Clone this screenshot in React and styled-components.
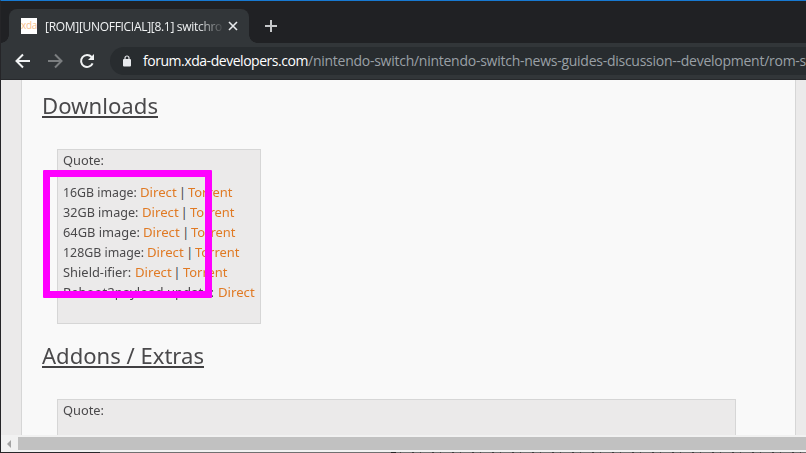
import React, { useLayoutEffect, useRef, useState } from "react";
import styled, { createGlobalStyle } from "styled-components";

const GlobalStyle = createGlobalStyle`
  * { box-sizing: border-box; }
  html, body { margin: 0; padding: 0; overflow: hidden; background: #1f1f22; }
`;

const Window = styled.div`
  position: relative;
  display: flex;
  flex-direction: column;
  width: 806px;
  height: 453px;
  overflow: hidden;
  border-top: 1px solid #1779d2;
  border-left: 1px solid #252528;
  background: #202124;
`;

const TabStrip = styled.div`
  flex: none;
  display: flex;
  height: 42px;
  padding: 8px 0 0 8px;
  background: #202124;
`;

const Tab = styled.div`
  position: relative;
  display: flex;
  align-items: center;
  width: 240px;
  height: 34px;
  padding: 0 10px 0 12px;
  border-radius: 8px 8px 0 0;
  background: #323639;
  &::before, &::after {
    content: "";
    position: absolute;
    bottom: 0;
    width: 8px;
    height: 8px;
  }
  &::before {
    left: -8px;
    background: radial-gradient(circle at 0 0, transparent 7.5px, #323639 8px);
  }
  &::after {
    right: -8px;
    background: radial-gradient(circle at 100% 0, transparent 7.5px, #323639 8px);
  }
`;

const Favicon = styled.div`
  flex: none;
  display: flex;
  justify-content: center;
  width: 16px;
  height: 16px;
  overflow: hidden;
  background: #fff;
  color: #f7c08e;
  font: 10px/14px "Open Sans", sans-serif;
  letter-spacing: -0.3px;
`;

const TabTitle = styled.div`
  flex: none;
  width: 177px;
  margin-left: 8px;
  padding-top: 1px;
  white-space: nowrap;
  color: #f1f3f4;
  font: 12px/16px "Open Sans", sans-serif;
  mask-image: linear-gradient(to right, #000 152px, rgba(0, 0, 0, 0.1) 177px);
`;

const CloseIcon = styled.svg`
  flex: none;
  width: 10px;
  height: 10px;
  margin-left: 6px;
`;

const PlusIcon = styled.svg`
  width: 12px;
  height: 12px;
  margin: 11px 0 0 16px;
`;

const Toolbar = styled.div`
  flex: none;
  display: flex;
  align-items: center;
  height: 37px;
  padding: 0 0 1px 14px;
  border-bottom: 1px solid #27292c;
  background: #323639;
`;

const NavIcon = styled.svg`
  flex: none;
  width: 16px;
  height: 16px;
  margin-right: 16px;
`;

const Omnibox = styled.div`
  flex: 1;
  display: flex;
  align-items: center;
  height: 28px;
  margin-left: -1px;
  padding-left: 13px;
  border-radius: 14px 0 0 14px;
  background: #282c2f;
`;

const LockIcon = styled.svg`
  flex: none;
  width: 8px;
  height: 12px;
  margin-right: 12px;
`;

const Url = styled.div`
  flex: none;
  padding-top: 1px;
  white-space: nowrap;
  color: #9aa0a6;
  font: 14px/20px "Open Sans", sans-serif;
`;

const Host = styled.span`
  color: #fff;
`;

const Viewport = styled.div`
  flex: none;
  height: 355px;
  padding: 0 10px 0 20px;
  overflow: hidden;
  background: #ebeaea;
`;

const Article = styled.main`
  height: 355px;
  padding: 13px 0 0 20px;
  border: solid #d6d6d6;
  border-width: 0 1px;
  background: #f9f9f9;
  color: #4a494b;
  font: 13.4px/20px "Noto Sans", sans-serif;
`;

const Heading = styled.h2`
  width: max-content;
  height: 25px;
  margin: 0;
  border-bottom: 2px solid #414042;
  color: #4a494b;
  font: 400 22.5px/25px "Noto Sans", sans-serif;
  white-space: nowrap;
`;

const QuoteBox = styled.section`
  width: ${(p) => p.$width}px;
  height: 175px;
  margin: 31px 0 19px 15px;
  padding: 0 0 0 5px;
  border: 1px solid #d6d6d6;
  background: #ebeaea;
`;

const QuoteTitle = styled.div`
  height: 32px;
`;

const DownloadRow = styled.div`
  display: flex;
  height: 20px;
`;

const TextRun = styled.span`
  flex: none;
  display: inline-block;
  white-space: pre;
  transform-origin: 0 50%;
  width: ${(p) => p.$width}px;
`;

const Link = styled.a`
  flex: none;
  color: #e07a24;
`;

const Divider = styled.span`
  flex: none;
  width: 11.5px;
  text-align: center;
`;

const Scrollbar = styled.div`
  flex: none;
  display: flex;
  align-items: center;
  height: 17px;
  background: #f1f1f1;
`;

const ArrowIcon = styled.svg`
  width: 4px;
  height: 8px;
  margin: 0 7px 0 6px;
`;

const Thumb = styled.div`
  flex: 1;
  height: 13px;
  background: #c1c1c1;
`;

const BottomEdge = styled.div`
  flex: none;
  height: 1px;
  background: linear-gradient(to right, #29272a 99px, #707070 99px 390px, #242424 390px 395px, transparent 395px),
    repeating-linear-gradient(to right, #707070 0 11px, #3b3b3b 11px 13px, #707070 13px 19px, #444 19px 20px);
`;

const Highlight = styled.div`
  position: absolute;
  left: 42px;
  top: 169px;
  width: 169px;
  height: 128px;
  border: 7px solid #ff00ff;
  border-radius: 1px;
`;

/* Makes a run of text occupy a given width, by tracking or by condensing the glyphs. */
function Fit({ width, condense, children }) {
  const ref = useRef(null);
  const [style, setStyle] = useState(null);
  useLayoutEffect(() => {
    const range = document.createRange();
    range.selectNodeContents(ref.current);
    const natural = range.getBoundingClientRect().width;
    setStyle(
      condense
        ? { transform: `scaleX(${width / natural})` }
        : { letterSpacing: (width - natural) / ref.current.textContent.length }
    );
  }, [width, condense]);
  return (
    <TextRun ref={ref} $width={width} style={style}>
      {children}
    </TextRun>
  );
}

const downloads = [
  { label: "16GB image:", width: 77, torrent: true },
  { label: "32GB image:", width: 78.8, torrent: true },
  { label: "64GB image:", width: 80.2, torrent: true },
  { label: "128GB image:", width: 84.3, torrent: true },
  { label: "Shield-ifier:", width: 71.5, torrent: true },
  { label: "Reboot2payload update:", width: 154.5 },
];

export default function App() {
  return (
    <>
      <GlobalStyle />
      <Window>
        <TabStrip>
          <Tab>
            <Favicon>xda</Favicon>
            <TabTitle>
              <Fit width={177}>[ROM][UNOFFICIAL][8.1] switchro</Fit>
            </TabTitle>
            <CloseIcon viewBox="0 0 10 10" fill="none" stroke="#e8eaed" strokeWidth="1.6">
              <path d="M1 1l8 8M9 1l-8 8" />
            </CloseIcon>
          </Tab>
          <PlusIcon viewBox="0 0 12 12" fill="none" stroke="#c6c8ca" strokeWidth="2">
            <path d="M6 0v12M0 6h12" />
          </PlusIcon>
        </TabStrip>
        <Toolbar>
          <NavIcon viewBox="0 0 16 16" fill="none" stroke="#f1f3f4" strokeWidth="2">
            <path d="M15 8H2.5M8 1.5L1.5 8L8 14.5" />
          </NavIcon>
          <NavIcon viewBox="0 0 16 16" fill="none" stroke="#7b7e80" strokeWidth="2">
            <path d="M1 8h12.5M8 1.5L14.5 8L8 14.5" />
          </NavIcon>
          <NavIcon viewBox="0 0 16 16" fill="none" stroke="#f1f3f4" strokeWidth="2">
            <path d="M13.6 10.3A6 6 0 1 1 12.6 4" />
            <path d="M15 1v6H9z" fill="#f1f3f4" stroke="none" />
          </NavIcon>
          <Omnibox>
            <LockIcon viewBox="0 0 8 12">
              <path d="M2 5V3a2 2 0 0 1 4 0V5" fill="none" stroke="#e8eaed" strokeWidth="1.2" />
              <rect y="4" width="8" height="7.5" rx="1" fill="#e8eaed" />
            </LockIcon>
            <Url>
              <Host>
                <Fit width={165}>forum.xda-developers.com</Fit>
              </Host>
              <Fit width={498}>/nintendo-switch/nintendo-switch-news-guides-discussion--development/rom-s</Fit>
            </Url>
          </Omnibox>
        </Toolbar>
        <Viewport>
          <Article>
            <Heading><Fit condense width={116}>Downloads</Fit></Heading>
            <QuoteBox $width={204}>
              <QuoteTitle><Fit condense width={41}>Quote:</Fit></QuoteTitle>
              {downloads.map((d) => (
                <DownloadRow key={d.label}>
                  <Fit condense width={d.width}>{d.label + " "}</Fit>
                  <Link><Fit condense width={36.7}>Direct</Fit></Link>
                  {d.torrent && <Divider>|</Divider>}
                  {d.torrent && <Link><Fit condense width={44.5}>Torrent</Fit></Link>}
                </DownloadRow>
              ))}
            </QuoteBox>
            <Heading><Fit condense width={162}>Addons / Extras</Fit></Heading>
            <QuoteBox $width={679}>
              <QuoteTitle><Fit condense width={41}>Quote:</Fit></QuoteTitle>
            </QuoteBox>
          </Article>
        </Viewport>
        <Scrollbar>
          <ArrowIcon viewBox="0 0 4 8"><path d="M4 0v8L0 4z" fill="#a3a3a3" /></ArrowIcon>
          <Thumb />
        </Scrollbar>
        <BottomEdge />
        <Highlight />
      </Window>
    </>
  );
}
